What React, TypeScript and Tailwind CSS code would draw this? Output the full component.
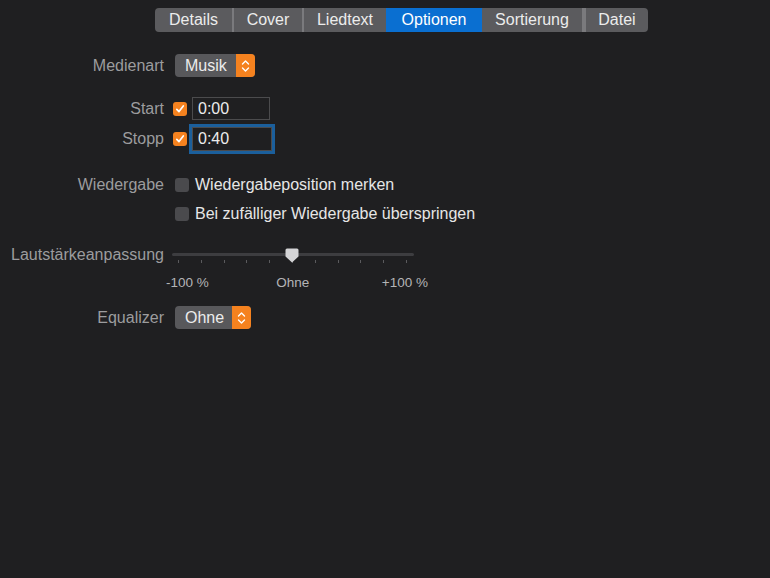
import React from 'react';

const tabs = ['Details', 'Cover', 'Liedtext', 'Optionen', 'Sortierung', 'Datei'];
const tabWidths = ['w-[77px]', 'w-[70px]', 'w-[84px]', 'w-[96px]', 'w-[102px]', 'w-[64px]'];

const Stepper = () => (
  <div className="flex h-full w-[19px] items-center justify-center rounded-r-[4px] bg-[#f5821f]">
    <svg width="9" height="14" viewBox="0 0 9 14" fill="none" stroke="white" strokeWidth="1.4" strokeLinecap="round" strokeLinejoin="round">
      <path d="M1.5 5 L4.5 2 L7.5 5" />
      <path d="M1.5 9 L4.5 12 L7.5 9" />
    </svg>
  </div>
);

const Popup = ({ value, width }: { value: string; width: string }) => (
  <div className={`flex h-[23px] ${width} items-stretch rounded-[4px] bg-[#58585b]`}>
    <span className="flex-1 pl-[10px] text-[16px] leading-[23px] text-[#ececec]">{value}</span>
    <Stepper />
  </div>
);

const CheckBox = ({ checked }: { checked?: boolean }) =>
  checked ? (
    <div className="flex h-[14px] w-[14px] items-center justify-center rounded-[3px] bg-[#f5821f]">
      <svg width="10" height="10" viewBox="0 0 10 10" fill="none" stroke="white" strokeWidth="1.7" strokeLinecap="round" strokeLinejoin="round">
        <path d="M1.8 5.3 L4 7.6 L8.3 2" />
      </svg>
    </div>
  ) : (
    <div className="h-[14px] w-[14px] rounded-[3px] bg-[#4a4a4d]" />
  );

const Row = ({ label, className, children }: { label?: string; className: string; children: React.ReactNode }) => (
  <div className={`flex h-[23px] items-center gap-[11px] ${className}`}>
    <div className="w-[164px] shrink-0 text-right text-[16px] text-[#9c9c9e]">{label}</div>
    {children}
  </div>
);

export default function App() {
  const ticks = Array.from({ length: 11 });
  return (
    <div
      className="h-[578px] w-[770px] overflow-hidden bg-[#1f1f21] text-[#e6e6e6]"
      style={{ fontFamily: '"Liberation Sans", Arial, sans-serif' }}
    >
      <div className="flex pl-[155px] pt-[8px]">
        <div className="flex h-[24px] overflow-hidden rounded-[4px] bg-[#5b5b5e]">
          {tabs.map((t, i) => (
            <div
              key={t}
              className={`flex ${tabWidths[i]} items-center justify-center text-[16px] ${
                t === 'Optionen' ? 'bg-[#0a6fd1] text-white' : 'text-[#ececec]'
              } ${i > 0 && t !== 'Optionen' && tabs[i - 1] !== 'Optionen' ? 'border-l-2 border-[#7a7a7d]' : ''} ${
                t === 'Sortierung' ? 'border-r-2 border-[#7a7a7d]' : ''
              }`}
            >
              {t}
            </div>
          ))}
        </div>
      </div>

      <Row label="Medienart" className="mt-[22px]">
        <Popup value="Musik" width="w-[80px]" />
      </Row>

      <Row label="Start" className="mt-[20px]">
        <div className="-ml-[2px] flex items-center gap-[5px]">
          <CheckBox checked />
          <div className="flex h-[23px] w-[78px] items-center border border-[#4b4b4d] pl-[5px] text-[16px] text-[#ececec]">
            0:00
          </div>
        </div>
      </Row>

      <Row label="Stopp" className="mt-[7px]">
        <div className="-ml-[2px] flex items-center gap-[5px]">
          <CheckBox checked />
          <div className="flex h-[24px] w-[80px] items-center border border-[#4b4b4d] pl-[5px] text-[16px] text-[#ececec] outline-3 outline-[#1b5f9c]">
            0:40
          </div>
        </div>
      </Row>

      <Row label="Wiedergabe" className="mt-[23px]">
        <div className="flex items-center gap-[6px]">
          <CheckBox />
          <span className="text-[16px] text-[#e6e6e6]">Wiedergabeposition merken</span>
        </div>
      </Row>

      <Row className="mt-[6px]">
        <div className="flex items-center gap-[6px]">
          <CheckBox />
          <span className="text-[16px] text-[#e6e6e6]">Bei zufälliger Wiedergabe überspringen</span>
        </div>
      </Row>

      <Row label="Lautstärkeanpassung" className="mt-[18px] !items-start">
        <div className="relative -ml-[3px] h-[23px] w-[242px]">
          <div className="absolute left-0 right-0 top-[10px] h-[3px] rounded-full bg-[#3d3d40]" />
          <div className="absolute left-[6px] top-[17px] flex w-[229px] justify-between">
            {ticks.map((_, i) => (
              <div key={i} className="h-[3px] w-px bg-[#5a5a5d]" />
            ))}
          </div>
          <svg className="absolute left-[113px] top-[5px]" width="14" height="15" viewBox="0 0 14 15">
            <path d="M2 0.5 H12 A1.5 1.5 0 0 1 13.5 2 V8.5 L7 14.5 L0.5 8.5 V2 A1.5 1.5 0 0 1 2 0.5 Z" fill="#d4d4d6" />
          </svg>
        </div>
      </Row>

      <div className="ml-[166px] mt-[8px] flex h-[18px] w-[262px] items-center justify-between text-[13.5px] text-[#b4b4b6]">
        <span>-100 %</span>
        <span className="mr-[5px]">Ohne</span>
        <span>+100 %</span>
      </div>

      <Row label="Equalizer" className="mt-[14px]">
        <Popup value="Ohne" width="w-[76px]" />
      </Row>
    </div>
  );
}
